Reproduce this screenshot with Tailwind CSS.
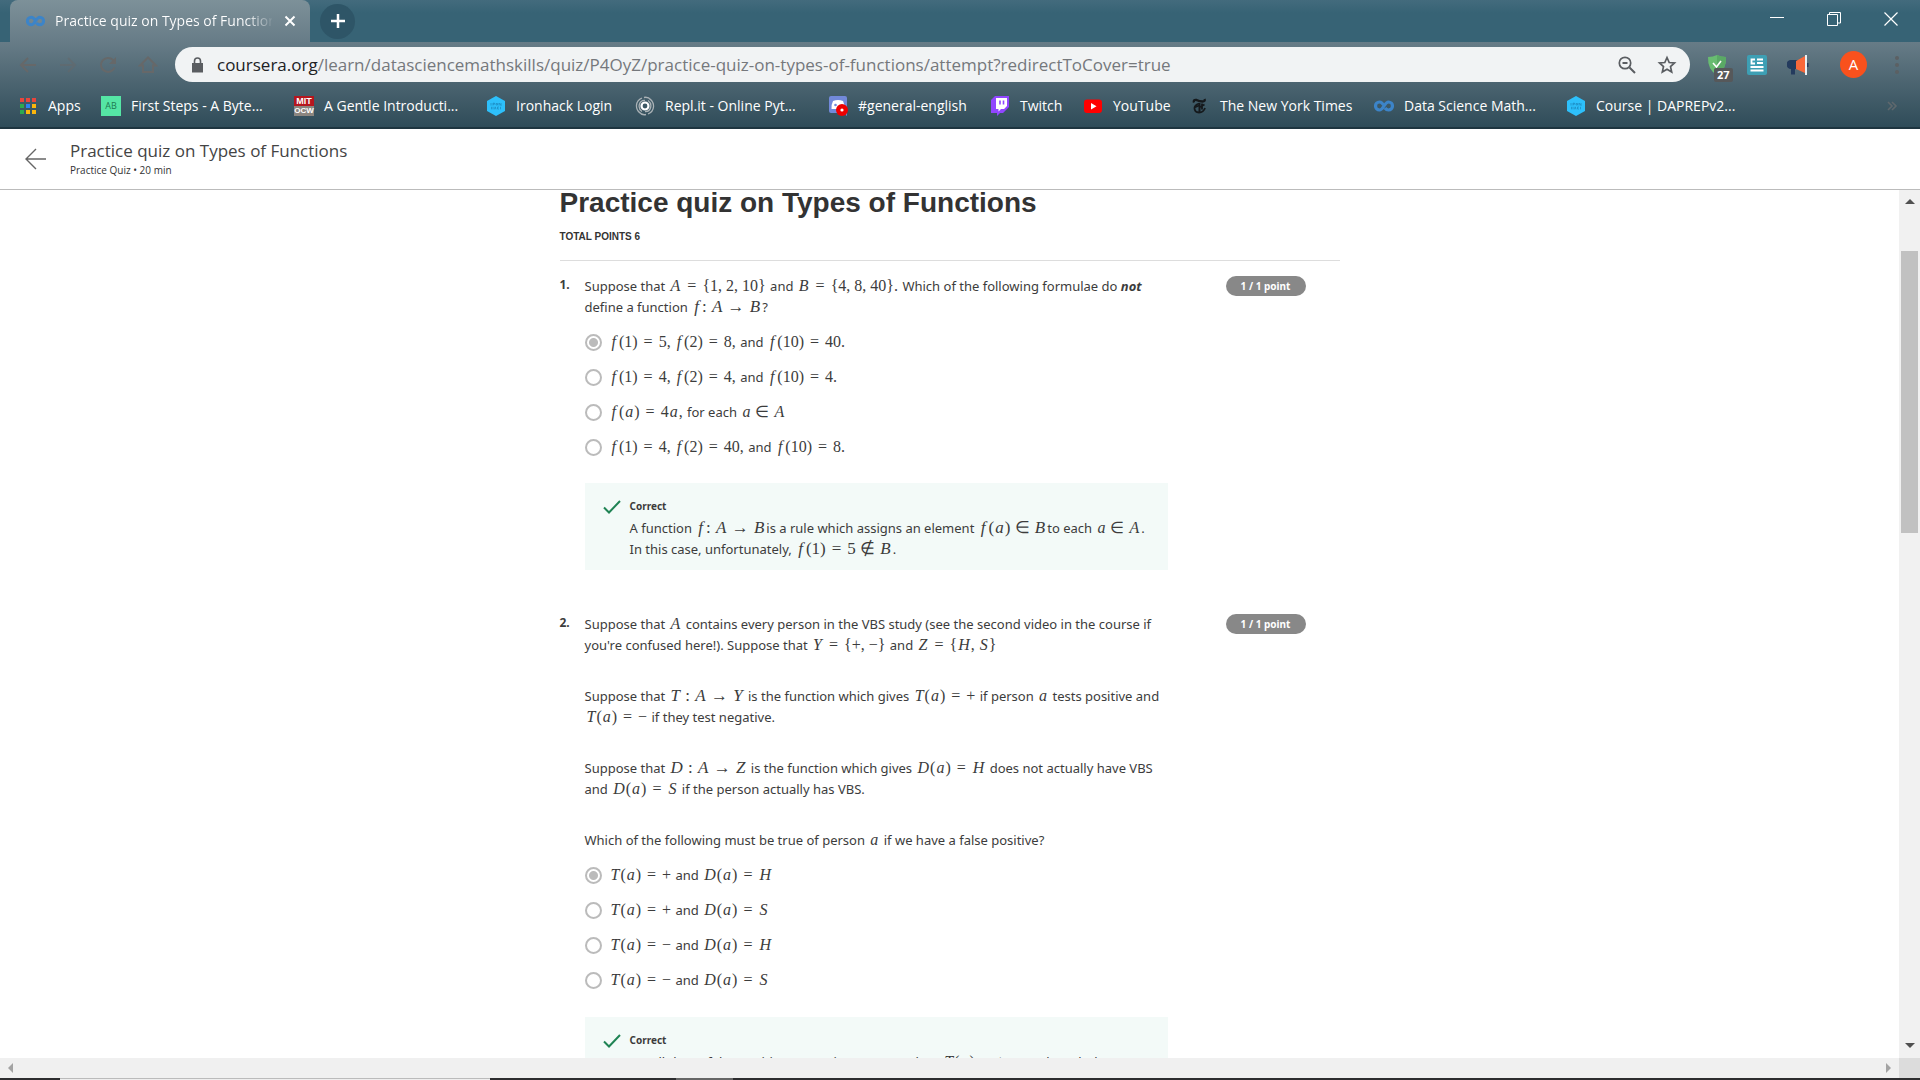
<!DOCTYPE html>
<html lang="en">
<head>
<meta charset="utf-8">
<title>Practice quiz on Types of Functions</title>
<script src="https://cdn.jsdelivr.net/npm/@tailwindcss/browser@4"></script>
</head>
<body class="flex h-screen flex-col overflow-hidden bg-white font-['Open_Sans',sans-serif] text-[#333]">

<svg class="hidden">
  <symbol id="infinity" viewBox="0 0 20 14"><path d="M10.500 7.500C8.500 4 7.500 3 5.500 3a4 4 0 0 0 0 8C9.500 11 10.500 3 14.500 3a4 4 0 0 1 0 8C13 11 12 10.500 11 9" fill="none" stroke="#3c84c8" stroke-width="3.200"/></symbol>
  <symbol id="ironhack" viewBox="0 0 20 20"><path d="M10 0l9 5v10l-9 5-9-5V5z" fill="#2dc0fb"/><path d="M5 7v2.500M7 7v2.500M7 7.200h1.500v1H7M10 7.500h1.500v1.500H10zM13 9.500V7l2 2.500V7M5.500 10.800v2.500M7 10.800v2.500M8.500 13.300l.7-2.500.8 2.500M13 11h-1.500v2H13M14.500 10.800v2.500" fill="none" stroke="#1b87bd" stroke-width=".7"/></symbol>
  <symbol id="check" viewBox="0 0 18 14"><path d="M1 7.500l5 5L17 1" fill="none" stroke="#1f8354" stroke-width="2"/></symbol>
</svg>

<header class="shrink-0">
  <!-- tab strip -->
  <div class="flex h-[42px] items-center bg-linear-to-b from-[#436b7d] to-[#376375] to-30% pl-[10px]">
    <div class="flex h-full w-[300px] items-center rounded-t-lg bg-linear-to-b from-[#7d9199] to-[#677c87] pr-[11px] pl-4 text-white">
      <svg class="mr-[10px] h-[14px] w-[19px]"><use href="#infinity"/></svg>
      <span class="w-[217px] overflow-hidden bg-linear-to-r from-white from-88% to-white/10 bg-clip-text text-sm whitespace-nowrap text-transparent">Practice quiz on Types of Functions</span>
      <button class="ml-auto" aria-label="Close tab"><svg class="size-[18px]" viewBox="0 0 18 18"><path d="M4.500 4.500l9 9m0-9l-9 9" stroke="#fff" stroke-width="2"/></svg></button>
    </div>
    <button class="ml-[10px] flex size-[35px] items-center justify-center rounded-full bg-[#2e5567]" aria-label="New tab"><svg class="size-4" viewBox="0 0 16 16"><path d="M8 1v14M1 8h14" stroke="#fff" stroke-width="2.500"/></svg></button>
    <div class="mr-[22px] mb-1 ml-auto flex gap-[43px]">
      <button aria-label="Minimize"><svg class="size-[14px]" viewBox="0 0 14 14"><path d="M0 5.500h14" stroke="#fff"/></svg></button>
      <button aria-label="Restore"><svg class="size-[14px]" viewBox="0 0 14 14"><path d="M.5 2.500h10v11H.5zM2.500 2V.5h11V11H11" fill="none" stroke="#fff"/></svg></button>
      <button aria-label="Close"><svg class="size-[14px]" viewBox="0 0 14 14"><path d="M.5.5l13 13m0-13l-13 13" stroke="#fff" stroke-width="1.200"/></svg></button>
    </div>
  </div>

  <div class="border-b-2 border-[#1e3540] bg-linear-to-b from-[#677c87] to-[#2f4c59]">
    <!-- toolbar -->
    <div class="flex h-[45px] items-center pr-[18px] pl-[18px]">
      <nav class="flex w-[157px] gap-5 text-[#666869]" aria-label="Navigation">
        <button aria-label="Back"><svg class="size-5" viewBox="0 0 20 20"><path d="M18 10H3m7-7l-7 7 7 7" fill="none" stroke="currentColor" stroke-width="2"/></svg></button>
        <button class="opacity-50" aria-label="Forward"><svg class="size-5" viewBox="0 0 20 20"><path d="M2 10h15m-7-7l7 7-7 7" fill="none" stroke="currentColor" stroke-width="2"/></svg></button>
        <button aria-label="Reload"><svg class="size-5" viewBox="0 0 20 20"><path d="M16.500 12.500A7 7 0 1 1 15 5l1.500 2" fill="none" stroke="currentColor" stroke-width="2"/><path d="M18 2v7h-7z" fill="currentColor"/></svg></button>
        <button aria-label="Home"><svg class="size-5" viewBox="0 0 20 20"><path d="M2 10.500L10 2.500l8 8h-3V17H5v-6.500z" fill="none" stroke="currentColor" stroke-width="2"/></svg></button>
      </nav>
      <div class="flex h-[35px] grow items-center rounded-full bg-[#f1f3f4] pr-[13px] pl-[17px]">
        <svg class="mr-[14px] h-4 w-[11px]" viewBox="0 0 11 16"><path d="M0 6h11v9.500H0z" fill="#5a5d61"/><path d="M2.500 6.500V4a3 3 0 0 1 6 0v2.500" fill="none" stroke="#5a5d61" stroke-width="1.600"/></svg>
        <p class="grow text-[17px] leading-6 whitespace-nowrap text-[#75787c]"><span class="text-[#202124]">coursera.org</span>/learn/datasciencemathskills/quiz/P4OyZ/practice-quiz-on-types-of-functions/attempt?redirectToCover=true</p>
        <button aria-label="Zoom"><svg class="size-[18px]" viewBox="0 0 18 18"><path d="M11.500 11.500L17 17M4.500 7h5" stroke="#5a5d61" stroke-width="2"/><circle cx="7" cy="7" r="5.700" fill="none" stroke="#5a5d61" stroke-width="1.700"/></svg></button>
        <button class="ml-[21px]" aria-label="Bookmark this page"><svg class="size-5" viewBox="0 0 20 20"><path d="M10 2.500l2.200 5 5.300.5-4 3.600 1.200 5.400L10 14.200 5.300 17l1.200-5.400-4-3.600 5.300-.5z" fill="none" stroke="#5a5d61" stroke-width="1.700"/></svg></button>
      </div>
      <div class="ml-[17px] flex items-center">
        <button class="relative mr-5" aria-label="Ad blocker, 27 blocked"><svg class="size-5" viewBox="0 0 20 20"><path d="M1 2q5 0 9-2 4 2 9 2 .5 13-9 18Q.5 15 1 2" fill="#68bc71"/><path d="M10 0q4 2 9 2 .5 13-9 18z" fill="#5aa965"/><path d="M6 8l3.500 4L14 6" fill="none" stroke="#fff" stroke-width="1.600"/></svg>
          <span class="absolute top-[13px] left-[7px] rounded-xs bg-[#56585a] px-[3px] text-[11px] leading-[14px] font-bold text-white">27</span></button>
        <button class="mr-5" aria-label="Reader"><svg class="size-5" viewBox="0 0 20 20"><rect width="20" height="20" rx="2" fill="#3d9fb4"/><path d="M8 4.500H4.500v4H8M10 4.500h6M10 8h6M3.500 12h13M3.500 15.500h13" fill="none" stroke="#fff" stroke-width="1.800"/></svg></button>
        <button aria-label="Announcements"><svg class="h-5 w-[22px]" viewBox="0 0 22 20"><path d="M11 5H4a4 4 0 0 0 0 9v5.500h4V14h3z" fill="#243b5e"/><path d="M9 6l9-5v17l-9-4z" fill="#f9683a"/><path d="M18 0h2v20h-2z" fill="#e8eef2"/><path d="M20 8h1.500v4H20z" fill="#243b5e"/></svg></button>
        <button class="mr-[25px] ml-[31px] size-[27px] rounded-full bg-[#f9511d] text-[15px] leading-[27px] text-white">A</button>
        <button aria-label="Menu"><svg class="h-5 w-[10px]" viewBox="0 0 10 20" fill="#5c6063"><circle cx="5" cy="3" r="2"/><circle cx="5" cy="10" r="2"/><circle cx="5" cy="17" r="2"/></svg></button>
      </div>
    </div>

    <!-- bookmarks -->
    <nav class="grid h-[40px] grid-cols-[83px_193px_192px_149px_193px_162px_93px_107px_184px_192px_1fr_auto] items-center pr-[22px] pb-[3px] pl-[18px] text-sm whitespace-nowrap text-white" aria-label="Bookmarks">
      <a href="#" class="flex items-center gap-[10px]"><svg class="size-5" viewBox="0 0 20 20"><path d="M2 2h4v4H2zM8 2h4v4H8zM14 2h4v4h-4z" fill="#e8453c"/><path d="M2 8h4v4H2zM2 14h4v4H2z" fill="#2da94f"/><path d="M8 8h4v4H8z" fill="#2a83f5"/><path d="M14 8h4v4h-4zM8 14h4v4H8zM14 14h4v4h-4z" fill="#fbb60c"/></svg>Apps</a>
      <a href="#" class="flex items-center gap-[10px]"><span class="size-5 bg-[#55e6a5] text-center text-[9px] leading-5 text-[#1d7a50]">AB</span>First Steps - A Byte...</a>
      <a href="#" class="flex items-center gap-[10px]"><span class="flex size-5 flex-col text-center font-['Liberation_Sans',sans-serif] text-[9px] leading-[10px] font-bold text-white"><span class="bg-[#b5161e]">MIT</span><span class="bg-[#8c8680] text-[8px]">OCW</span></span>A Gentle Introducti...</a>
      <a href="#" class="flex items-center gap-[10px]"><svg class="size-5"><use href="#ironhack"/></svg>Ironhack Login</a>
      <a href="#" class="flex items-center gap-[10px]"><svg class="size-5" viewBox="0 0 20 20" fill="none" stroke="#aab2b6" stroke-width="1.300"><circle cx="10" cy="10" r="3.500" stroke="#fff" stroke-width="2.200"/><path d="M10 4.500C4 4 2 12 7 15.500M10 15.500C16 16 18 8 13 4.500M7 2C0 5 0 13 5 17M13 18c7-3 7-11 2-15M9 1.500q4-1 7 2.500M11 18.500q-4 1-7-2.500"/></svg>Repl.it - Online Pyt...</a>
      <a href="#" class="flex items-center gap-[10px]"><svg class="size-5" viewBox="0 0 20 20"><path d="M3 0h14a2 2 0 0 1 2 2v18l-4-3H3a2 2 0 0 1-2-2V2a2 2 0 0 1 2-2" fill="#7289da"/><path d="M5 5q5-2 10 0 2 4 1.500 8h-13Q3 9 5 5" fill="#fff"/><circle cx="7.500" cy="9" r="1.300" fill="#7289da"/><circle cx="14" cy="14" r="6" fill="#e00"/><circle cx="14" cy="14" r="1.600" fill="#fff"/></svg>#general-english</a>
      <a href="#" class="flex items-center gap-[10px]"><svg class="size-5" viewBox="0 0 20 20"><path d="M5 0h14v11l-6 6h-3l-3 3v-3H1V4z" fill="#9146ff"/><path d="M6 2h11v8l-3 3h-3l-2.500 2.500V13H6z" fill="#fff"/><path d="M10 4.500v4M13.500 4.500v4" stroke="#9146ff" stroke-width="1.600"/></svg>Twitch</a>
      <a href="#" class="flex items-center gap-[10px]"><svg class="size-5" viewBox="0 0 20 20"><rect x="1" y="3.500" width="18" height="13.500" rx="3" fill="#f00"/><path d="M8 7l5.500 3.200L8 13.500z" fill="#fff"/></svg>YouTube</a>
      <a href="#" class="flex items-center gap-[10px]"><svg class="size-5" viewBox="0 0 20 20" fill="none" stroke="#15191c"><path d="M4 6.500Q3 3.500 6.500 4q3 1.500 6 1.500t2-2.500" stroke-width="2.400"/><path d="M9.500 7v9" stroke-width="2"/><path d="M9 7.500q-4.500 1.500-4.500 4.500 0 4.500 4.500 4.500 4.500 0 6-4.500M4.500 11.500l4.500-2M12 7.500v6M14.500 8.500L10 11" stroke-width="1.800"/></svg>The New York Times</a>
      <a href="#" class="flex items-center gap-[10px]"><svg class="h-[14px] w-5"><use href="#infinity"/></svg>Data Science Math...</a>
      <a href="#" class="flex items-center gap-[10px]"><svg class="size-5"><use href="#ironhack"/></svg>Course | DAPREPv2...</a>
      <button aria-label="More bookmarks"><svg class="size-3" viewBox="0 0 12 12"><path d="M2 2l4 4-4 4m4-8l4 4-4 4" fill="none" stroke="#5f686d" stroke-width="1.600"/></svg></button>
    </nav>
  </div>

  <!-- lesson header -->
  <div class="flex h-[61px] items-center border-b border-[#bbb] pl-[25px]">
    <a href="#" aria-label="Back to course"><svg class="h-[22px] w-[21px]" viewBox="0 0 21 22"><path d="M21 11H1M11 1L1 11l10 10" fill="none" stroke="#666" stroke-width="1.400"/></svg></a>
    <div class="mb-[3px] ml-6">
      <p class="text-[17px] leading-6 text-[#444]">Practice quiz on Types of Functions</p>
      <p class="text-[10px] leading-[14px]">Practice Quiz • 20 min</p>
    </div>
  </div>
</header>

<div class="flex min-h-0 grow">
  <main class="min-w-0 grow overflow-hidden">
    <div class="mx-auto max-w-[780px] font-['Noto_Sans',sans-serif] text-[13px] leading-[21px] [&_var]:px-px [&_var]:font-['Liberation_Serif',serif] [&_var]:text-base [&_var]:leading-none [&_var]:whitespace-nowrap [&_var]:not-italic [&_var_em]:pr-[3px] [&_var_em]:pl-0.5 [&_var_i]:px-px [&_var_span]:mx-[6px]">
      <h1 class="font-['Liberation_Sans',sans-serif] text-[28px] leading-[26px] font-bold">Practice quiz on Types of Functions</h1>
      <p class="mt-[13px] border-b border-[#ddd] pb-[15px] font-['Liberation_Sans',sans-serif] text-[10px] leading-4 font-bold">TOTAL POINTS 6</p>

      <section class="grid grid-cols-[25px_583px_1fr] pt-[15px] text-[#3c3c3c]">
        <p class="text-xs leading-[17px] font-bold">1.</p>
        <div>
          <p>Suppose that <var><i>A</i><span>=</span>{1, 2, 10}</var> and <var><i>B</i><span>=</span>{4, 8, 40}.</var> Which of the following formulae do <strong class="italic">not</strong><br>define a function <var class="text-[17px]!"><em>f</em>: <i>A</i> → <i>B</i></var>?</p>
          <fieldset class="mt-[7px]">
            <label class="flex h-[35px] items-center gap-[7px]"><input type="radio" name="q1" checked class="size-[17px] appearance-none rounded-full border-2 border-[#bbb] checked:bg-[radial-gradient(circle,#bbb_4px,transparent_5px)]"><span><var><em>f</em>(1)<span>=</span>5, <em>f</em>(2)<span>=</span>8,</var> and <var><em>f</em>(10)<span>=</span>40.</var></span></label>
            <label class="flex h-[35px] items-center gap-[7px]"><input type="radio" name="q1" class="size-[17px] appearance-none rounded-full border-2 border-[#bbb]"><span><var><em>f</em>(1)<span>=</span>4, <em>f</em>(2)<span>=</span>4,</var> and <var><em>f</em>(10)<span>=</span>4.</var></span></label>
            <label class="flex h-[35px] items-center gap-[7px]"><input type="radio" name="q1" class="size-[17px] appearance-none rounded-full border-2 border-[#bbb]"><span><var><em>f</em>(<i>a</i>)<span>=</span>4<i>a</i>,</var> for each <var><i>a</i> ∈ <i>A</i></var></span></label>
            <label class="flex h-[35px] items-center gap-[7px]"><input type="radio" name="q1" class="size-[17px] appearance-none rounded-full border-2 border-[#bbb]"><span><var><em>f</em>(1)<span>=</span>4, <em>f</em>(2)<span>=</span>40,</var> and <var><em>f</em>(10)<span>=</span>8.</var></span></label>
          </fieldset>
          <div class="mt-[18px] flex bg-[#f3faf8] pt-[13px] pb-[10px] pl-[18px]">
            <svg class="mt-1 mr-[9px] h-[14px] w-[18px]"><use href="#check"/></svg>
            <div>
              <p class="text-[10px] font-bold">Correct</p>
              <p class="mt-px">A function <var class="text-[17px]!"><em>f</em>: <i>A</i> → <i>B</i></var>is a rule which assigns an element <var class="text-[17px]!"><em>f</em>(<i>a</i>) ∈ <i>B</i></var>to each <var><i>a</i> ∈ <i>A</i></var>.<br>In this case, unfortunately, <var class="text-[17px]!"><em>f</em>(1)<span>=</span>5 ∉ <i>B</i></var>.</p>
            </div>
          </div>
        </div>
        <p class="ml-[58px] h-5 w-20 rounded-full bg-[#888] text-center text-[10px] leading-5 font-bold text-white">1 / 1 point</p>
      </section>

      <section class="mt-[29px] grid grid-cols-[25px_583px_1fr] pt-[15px] text-[#3c3c3c]">
        <p class="text-xs leading-[17px] font-bold">2.</p>
        <div>
          <div class="flex flex-col gap-[30px]">
            <p>Suppose that <var><i>A</i></var> contains every person in the VBS study (see the second video in the course if<br>you're confused here!). Suppose that <var><i>Y</i><span>=</span>{+, −}</var> and <var><i>Z</i><span>=</span>{<i>H</i>, <i>S</i>}</var></p>
            <p>Suppose that <var class="text-[17px]!"><i>T</i> : <i>A</i> → <i>Y</i></var> is the function which gives <var><i>T</i>(<i>a</i>)<span>=</span>+</var> if person <var><i>a</i></var> tests positive and<br><var><i>T</i>(<i>a</i>)<span>=</span>−</var> if they test negative.</p>
            <p>Suppose that <var class="text-[17px]!"><i>D</i> : <i>A</i> → <i>Z</i></var> is the function which gives <var><i>D</i>(<i>a</i>)<span>=</span><i>H</i></var> does not actually have VBS<br>and <var><i>D</i>(<i>a</i>)<span>=</span><i>S</i></var> if the person actually has VBS.</p>
            <p>Which of the following must be true of person <var><i>a</i></var> if we have a false positive?</p>
          </div>
          <fieldset class="mt-[7px]">
            <label class="flex h-[35px] items-center gap-[7px]"><input type="radio" name="q2" checked class="size-[17px] appearance-none rounded-full border-2 border-[#bbb] checked:bg-[radial-gradient(circle,#bbb_4px,transparent_5px)]"><span><var><i>T</i>(<i>a</i>)<span>=</span>+</var> and <var><i>D</i>(<i>a</i>)<span>=</span><i>H</i></var></span></label>
            <label class="flex h-[35px] items-center gap-[7px]"><input type="radio" name="q2" class="size-[17px] appearance-none rounded-full border-2 border-[#bbb]"><span><var><i>T</i>(<i>a</i>)<span>=</span>+</var> and <var><i>D</i>(<i>a</i>)<span>=</span><i>S</i></var></span></label>
            <label class="flex h-[35px] items-center gap-[7px]"><input type="radio" name="q2" class="size-[17px] appearance-none rounded-full border-2 border-[#bbb]"><span><var><i>T</i>(<i>a</i>)<span>=</span>−</var> and <var><i>D</i>(<i>a</i>)<span>=</span><i>H</i></var></span></label>
            <label class="flex h-[35px] items-center gap-[7px]"><input type="radio" name="q2" class="size-[17px] appearance-none rounded-full border-2 border-[#bbb]"><span><var><i>T</i>(<i>a</i>)<span>=</span>−</var> and <var><i>D</i>(<i>a</i>)<span>=</span><i>S</i></var></span></label>
          </fieldset>
          <div class="mt-[19px] flex bg-[#f3faf8] pt-[13px] pb-[10px] pl-[18px]">
            <svg class="mt-1 mr-[9px] h-[14px] w-[18px]"><use href="#check"/></svg>
            <div>
              <p class="text-[10px] font-bold">Correct</p>
              <p class="mt-px">Recall that a false positive occurs in a person when <var><i>T</i>(<i>a</i>)<span>=</span>+</var> even though the</p>
            </div>
          </div>
        </div>
        <p class="ml-[58px] h-5 w-20 rounded-full bg-[#888] text-center text-[10px] leading-5 font-bold text-white">1 / 1 point</p>
      </section>
    </div>
  </main>

  <!-- vertical scrollbar -->
  <div class="flex w-[21px] shrink-0 flex-col items-center bg-[#f1f1f1] pt-[9px] pb-[9px]">
    <svg class="h-[6px] w-[10px]" viewBox="0 0 10 6"><path d="M5 0l5 5H0z" fill="#505050"/></svg>
    <div class="mt-[46px] h-[282px] w-[17px] bg-[#c1c1c1]"></div>
    <svg class="mt-auto h-[6px] w-[10px]" viewBox="0 0 10 6"><path d="M0 0h10L5 5z" fill="#505050"/></svg>
  </div>
</div>

<!-- horizontal scrollbar -->
<div class="flex h-5 shrink-0 items-center bg-[#f0f0f0] pl-2">
  <svg class="h-[10px] w-[5px]" viewBox="0 0 5 10"><path d="M5 0v10L0 5z" fill="#a3a3a3"/></svg>
  <svg class="mr-2 ml-auto h-[10px] w-[5px]" viewBox="0 0 5 10"><path d="M0 0v10l5-5z" fill="#a3a3a3"/></svg>
  <div class="h-full w-[21px] bg-[#dcdcdc]"></div>
</div>
<div class="flex h-[2px] shrink-0 bg-[#2d2d2f]">
  <div class="ml-[60px] w-[430px] border-t border-[#bbb] bg-[#eee]"></div>
  <div class="ml-[186px] w-[57px] bg-[#666]"></div>
</div>
</body>
</html>
